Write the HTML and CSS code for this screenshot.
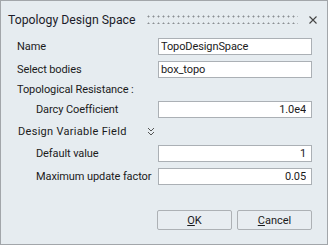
FILE: index.html
```html
<!doctype html>
<html>
<head>
  <title>Topology Design Space</title>
  <link rel="stylesheet" href="styles.css">
</head>
<body>
  <div class="dialog">
    <div class="titlebar">
      <span class="title">Topology Design Space</span>
      <span class="grip"></span>
      <svg class="close" width="8" height="8" viewBox="0 0 8 8">
        <path d="M0.5 0.5 L7.5 7.5 M7.5 0.5 L0.5 7.5" stroke="#444" stroke-width="1.1" fill="none"/>
      </svg>
    </div>
    <div class="form">
      <div class="row">
        <label for="name">Name</label>
        <input id="name" value="TopoDesignSpace">
      </div>
      <div class="row gap6">
        <label for="bodies">Select bodies</label>
        <input id="bodies" value="box_topo">
      </div>
      <div class="row gap3">
        <span class="heading">Topological Resistance :</span>
      </div>
      <div class="row gap3">
        <label class="sub" for="darcy">Darcy Coefficient</label>
        <input id="darcy" class="num" value="1.0e4">
      </div>
      <div class="row gap5">
        <span class="heading field"><span>Design Variable Field</span><svg class="chev" width="8" height="9" viewBox="0 0 8 9">
            <path d="M1 1 L4 4 L7 1 M1 5 L4 8 L7 5" stroke="#555" stroke-width="1" fill="none"/>
          </svg></span>
      </div>
      <div class="row gap5">
        <label class="sub" for="default">Default value</label>
        <input id="default" class="num" value="1">
      </div>
      <div class="row gap6">
        <label class="sub" for="maxup">Maximum update factor</label>
        <input id="maxup" class="num" value="0.05">
      </div>
    </div>
    <div class="buttons">
      <button><u>O</u>K</button>
      <button><u>C</u>ancel</button>
    </div>
  </div>
</body>
</html>
```

FILE: styles.css
```css
body {
  margin: 0;
  font-family: Roboto, "Liberation Sans", sans-serif;
  font-size: 11px;
  letter-spacing: -0.1px;
  color: #1b1b1b;
}
.dialog {
  width: 328px;
  height: 245px;
  box-sizing: border-box;
  border: 1px solid #a2a6aa;
  background: #e6ecf0;
  display: flex;
  flex-direction: column;
}

.titlebar {
  height: 37px;
  display: flex;
  align-items: center;
  padding: 0 10px 0 7px;
}
.title {
  font-size: 12.25px;
  letter-spacing: 0;
  color: #1c1c2a;
}
.grip {
  flex: 1;
  height: 9px;
  margin: 0 11px 0 11px;
  background-image: radial-gradient(circle, #8a8e92 0.9px, transparent 1.1px);
  background-size: 5px 7px;
  background-position: -1px -2px;
}
.close { display: block; }

.form {
  padding: 0 15px;
}
.row {
  height: 17px;
  display: flex;
  align-items: center;
  white-space: nowrap;
}
.gap6 { margin-top: 6px; }
.gap5 { margin-top: 5px; }
.gap3 { margin-top: 3px; }
.row label, .heading {
  flex: 1;
  padding-left: 1px;
}
.row .sub { padding-left: 20px; }
.field { display: flex; align-items: center; padding-left: 2px; letter-spacing: 0.3px; }
.chev { margin-left: 20px; flex: none; }

input {
  width: 154px;
  height: 17px;
  box-sizing: border-box;
  border: 1px solid #abb0b5;
  background: #fff;
  padding: 0 2px;
  font-family: Roboto, "Liberation Sans", sans-serif;
  font-size: 11px;
  letter-spacing: -0.1px;
  color: #1b1b1b;
  outline: none;
}
input.num {
  text-align: right;
  padding-right: 5px;
}

.buttons {
  display: flex;
  justify-content: flex-end;
  gap: 5px;
  margin-top: 25px;
  padding: 0 15px;
}
button {
  width: 75px;
  height: 20px;
  border: 1px solid #adb1b5;
  border-radius: 2px;
  background: #e8edf1;
  font-family: Roboto, "Liberation Sans", sans-serif;
  font-size: 11px;
  color: #1b1b1b;
  padding: 0;
}
```
